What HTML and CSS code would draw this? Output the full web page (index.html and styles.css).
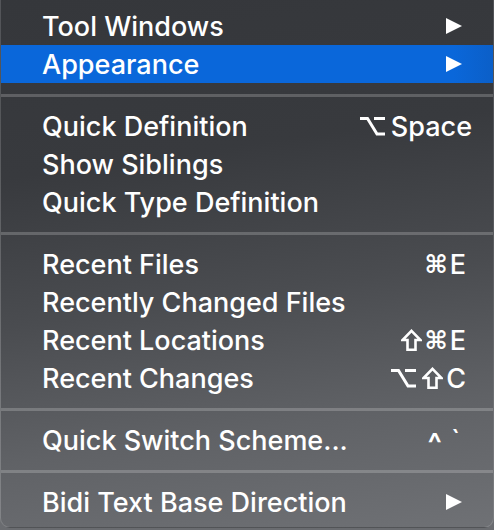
FILE: index.html
```html
<!DOCTYPE html>
<html>
<head>
<meta charset="utf-8">
<link rel="stylesheet" href="styles.css">
</head>
<body>
<div class="menu">
  <div class="item"><span class="label">Tool Windows</span><svg class="arrow" viewBox="0 0 16 16"><polygon points="0,0 16,8 0,16"/></svg></div>
  <div class="item active"><span class="label">Appearance</span><svg class="arrow" viewBox="0 0 16 16"><polygon points="0,0 16,8 0,16"/></svg></div>
  <div class="sep"></div>
  <div class="item"><span class="label">Quick Definition</span><span class="key"><svg class="opt" viewBox="0 0 25 20"><path d="M0 2.5 H7.5 L17 18 H25 M14 2.5 H25"/></svg><span class="txt space">Space</span></span></div>
  <div class="item"><span class="label">Show Siblings</span></div>
  <div class="item"><span class="label">Quick Type Definition</span></div>
  <div class="sep"></div>
  <div class="item"><span class="label">Recent Files</span><span class="key"><span class="cmd">⌘</span><span class="txt">E</span></span></div>
  <div class="item"><span class="label">Recently Changed Files</span></div>
  <div class="item"><span class="label">Recent Locations</span><span class="key"><svg class="shift" viewBox="0 0 21 22"><polygon points="10.5,1.8 19.5,11 14.5,11 14.5,20.7 6.5,20.7 6.5,11 1.5,11"/></svg><span class="cmd">⌘</span><span class="txt">E</span></span></div>
  <div class="item"><span class="label">Recent Changes</span><span class="key"><svg class="opt" viewBox="0 0 25 20"><path d="M0 2.5 H7.5 L17 18 H25 M14 2.5 H25"/></svg><svg class="shift" viewBox="0 0 21 22"><polygon points="10.5,1.8 19.5,11 14.5,11 14.5,20.7 6.5,20.7 6.5,11 1.5,11"/></svg><span class="txt">C</span></span></div>
  <div class="sep"></div>
  <div class="item"><span class="label">Quick Switch Scheme...</span><span class="key"><span class="caret">^</span><span class="txt grave">`</span></span></div>
  <div class="sep"></div>
  <div class="item"><span class="label">Bidi Text Base Direction</span><svg class="arrow" viewBox="0 0 16 16"><polygon points="0,0 16,8 0,16"/></svg></div>
</div>
</body>
</html>
```
FILE: styles.css
```css
html, body {
  margin: 0;
  padding: 0;
}
body {
  width: 494px;
  height: 530px;
  overflow: hidden;
  background: #6a6c70;
  font-family: Inter, "Liberation Sans", sans-serif;
}
.menu {
  box-sizing: border-box;
  width: 494px;
  height: 528px;
  padding-top: 7px;
  border: 1px solid rgba(255, 255, 255, 0.14);
  border-top: none;
  border-radius: 0 0 10px 10px;
  background: linear-gradient(172deg, #35373b 0%, #383a3e 30%, #4a4c50 55%, #606266 78%, #6f7175 100%);
  color: #ffffff;
  overflow: hidden;
}
.item {
  display: flex;
  align-items: center;
  height: 38px;
  padding: 0 27px 0 41px;
  font-size: 27px;
  font-weight: 500;
}
.item.active {
  background: linear-gradient(90deg, #0a67da 0%, #0a67da 92%, #0b5fc8 100%);
}
.label {
  flex: 1;
  white-space: nowrap;
}
.key {
  display: flex;
  align-items: center;
  white-space: nowrap;
}
.txt {
  display: block;
}
.space {
  margin-right: -6px;
}
.grave {
  margin-right: 6px;
}
.opt {
  width: 25px;
  height: 20px;
  margin-right: 6px;
  fill: none;
  stroke: #ffffff;
  stroke-width: 3;
}
.shift {
  width: 21px;
  height: 22px;
  margin-right: 3px;
  fill: none;
  stroke: #ffffff;
  stroke-width: 2.6;
  stroke-linejoin: miter;
}
.cmd {
  font-family: "DejaVu Sans", sans-serif;
  font-weight: bold;
  font-size: 25px;
  margin-right: 2px;
}
.caret {
  font-weight: 600;
  font-size: 30px;
  margin-right: 9px;
  position: relative;
  top: 3px;
}
.arrow {
  width: 16px;
  height: 16px;
  margin-right: 4px;
  fill: #ffffff;
}
.sep {
  height: 24px;
  display: flex;
  align-items: center;
}
.sep::before {
  content: "";
  display: block;
  width: 100%;
  height: 3px;
  background: rgba(255, 255, 255, 0.2);
}
```
